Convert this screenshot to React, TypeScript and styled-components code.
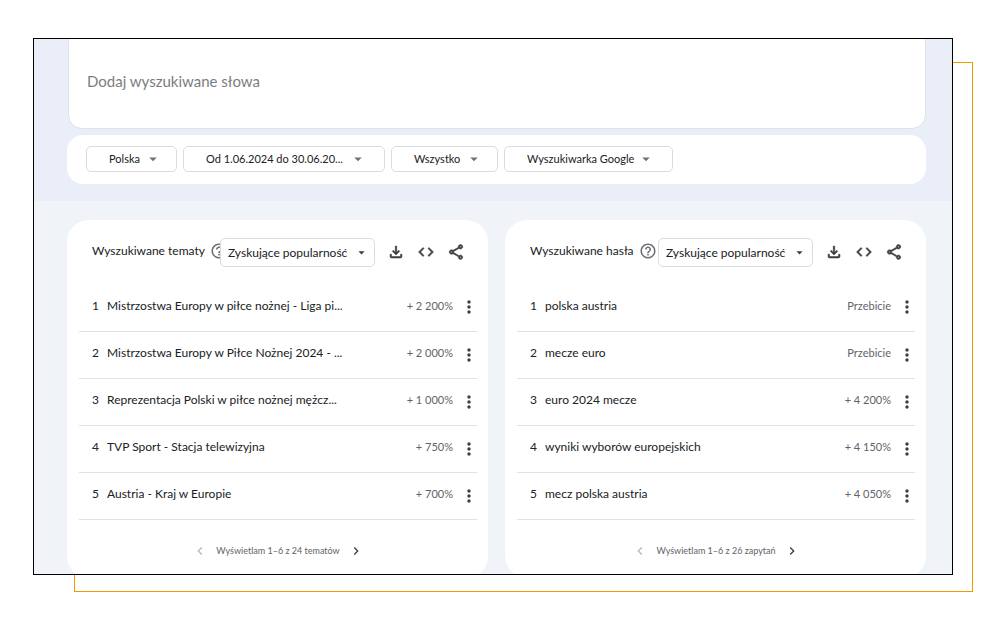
import React from "react";
import styled, { createGlobalStyle } from "styled-components";
import {
  MdArrowDropDown,
  MdChevronLeft,
  MdChevronRight,
  MdCode,
  MdHelpOutline,
  MdMoreVert,
  MdOutlineFileDownload,
  MdOutlineShare,
} from "react-icons/md";

const GlobalStyle = createGlobalStyle`
  *, *::before, *::after { box-sizing: border-box; }
  body {
    margin: 0;
    background: #fff;
    color: #202124;
    font-family: Lato, "Open Sans", sans-serif;
    font-size: 12px;
    line-height: 16px;
  }
  button, input, select { font: inherit; color: inherit; }
`;

const Page = styled.main`
  padding: 38px 48px 51px 33px;
`;

const Framed = styled.div`
  position: relative;
  z-index: 0;

  &::before {
    content: "";
    position: absolute;
    z-index: -1;
    inset: 24px -20px -17px 41px;
    border: 1px solid #f29900;
  }
`;

const Frame = styled.div`
  border: 1px solid #000;
  background: #f0f4f9;
  overflow: hidden;
`;

const Top = styled.section`
  padding: 0 26px 17px 33px;
  background: #e9eef8;
`;

const SearchCard = styled.div`
  margin: -10px 0 6px 1px;
  padding: 42px 18px 38px;
  border: 1px solid #e0e2e6;
  border-radius: 14px;
  background: #fff;
`;

const SearchInput = styled.input`
  display: block;
  width: 100%;
  height: 18px;
  padding: 0;
  border: 0;
  outline: 0;
  background: transparent;
  font-size: 15px;
  &::placeholder { color: #7b7d80; opacity: 1; }
`;

const Filters = styled.div`
  display: flex;
  gap: 6px;
  padding: 11px 19px 12px;
  border-radius: 16px;
  background: #fff;
`;

const SelectBox = styled.label<{ $width: number; $caret: number; $tall?: boolean }>`
  position: relative;
  z-index: 1;
  display: grid;
  align-items: center;
  flex: none;
  width: ${(p) => p.$width}px;
  height: ${(p) => (p.$tall ? 29 : 26)}px;
  border: 1px solid #dadce0;
  border-radius: 5px;
  background: #fff;

  > * { grid-area: 1 / 1; }
  > svg {
    justify-self: end;
    margin-right: ${(p) => p.$caret}px;
    color: ${(p) => (p.$tall ? "#3c4043" : "#6f7377")};
    pointer-events: none;
  }
`;

const Select = styled.select<{ $inset: number; $small?: boolean }>`
  appearance: none;
  width: 100%;
  height: 100%;
  padding: 0 0 0 ${(p) => p.$inset}px;
  border: 0;
  outline: 0;
  background: transparent;
  font-size: ${(p) => (p.$small ? 11 : 12)}px;
`;

const Cards = styled.div`
  display: grid;
  grid-template-columns: 1fr 1fr;
  gap: 17px;
  padding: 19px 26px 0 33px;
`;

const Card = styled.section`
  min-width: 0;
  margin-bottom: -4px;
  padding: 18px 11px 19px 12px;
  border-radius: 22px;
  background: #fff;
`;

const CardHeader = styled.header`
  display: flex;
  align-items: center;
  padding: 0 12px 0 13px;
`;

const TitleGroup = styled.div`
  display: flex;
  align-items: center;
  gap: 5px;
  flex: 1;
  min-width: 0;
  padding-bottom: 3px;
  white-space: nowrap;
`;

const Title = styled.h2`
  margin: 0;
  font-size: 12px;
  font-weight: 400;
`;

const IconButton = styled.button`
  display: inline-flex;
  align-items: center;
  justify-content: center;
  flex: none;
  padding: 0;
  border: 0;
  background: transparent;
  color: #3c4043;
  cursor: pointer;
  &:disabled { color: #b4b7bb; cursor: default; }
`;

const Actions = styled.div`
  display: flex;
  gap: 12px;
  margin-left: 12px;
  padding-bottom: 2px;

  path:not([fill="none"]) {
    stroke: currentColor;
    stroke-width: 0.7;
  }
`;

const Table = styled.table`
  width: 100%;
  margin-top: 17px;
  border-collapse: collapse;
  table-layout: fixed;
`;

const Row = styled.tr`
  height: 47px;
  border-bottom: 1px solid #dfe1e4;
`;

const Rank = styled.td`
  width: 28px;
  padding: 0 0 3px 13px;
`;

const Term = styled.td`
  padding: 0 0 3px;
  overflow: hidden;
  white-space: nowrap;
`;

const Value = styled.td`
  width: 60px;
  padding: 0 0 3px;
  color: #5f6368;
  font-size: 11px;
  text-align: right;
  white-space: nowrap;
`;

const Menu = styled.td`
  width: 24px;
  padding: 0;

  > button { display: flex; margin-left: 6px; }
`;

const Pager = styled.nav`
  display: flex;
  align-items: center;
  justify-content: center;
  gap: 8px;
  padding-top: 23px;
  color: #5f6368;
  font-size: 9px;
`;

const filters = [
  { label: "Region", text: "Polska", width: 91, caret: 14 },
  { label: "Okres", text: "Od 1.06.2024 do 30.06.20...", width: 202, caret: 17 },
  { label: "Kategoria", text: "Wszystko", width: 107, caret: 14 },
  { label: "Typ wyszukiwania", text: "Wyszukiwarka Google", width: 169, caret: 17 },
];

type Entry = [term: string, value: string];

const topics: Entry[] = [
  ["Mistrzostwa Europy w piłce nożnej - Liga pi...", "+ 2 200%"],
  ["Mistrzostwa Europy w Piłce Nożnej 2024 - ...", "+ 2 000%"],
  ["Reprezentacja Polski w piłce nożnej mężcz...", "+ 1 000%"],
  ["TVP Sport - Stacja telewizyjna", "+ 750%"],
  ["Austria - Kraj w Europie", "+ 700%"],
];

const queries: Entry[] = [
  ["polska austria", "Przebicie"],
  ["mecze euro", "Przebicie"],
  ["euro 2024 mecze", "+ 4 200%"],
  ["wyniki wyborów europejskich", "+ 4 150%"],
  ["mecz polska austria", "+ 4 050%"],
];

function TrendCard({ title, entries, range }: { title: string; entries: Entry[]; range: string }) {
  return (
    <Card>
      <CardHeader>
        <TitleGroup>
          <Title>{title}</Title>
          <IconButton aria-label="Pomoc">
            <MdHelpOutline size={18} color="#6a6d71" />
          </IconButton>
        </TitleGroup>
        <SelectBox $width={155} $caret={5} $tall>
          <Select $inset={7} aria-label={`${title} - sortowanie`}>
            <option>Zyskujące popularność</option>
          </Select>
          <MdArrowDropDown size={15} />
        </SelectBox>
        <Actions>
          <IconButton aria-label="Pobierz"><MdOutlineFileDownload size={18} /></IconButton>
          <IconButton aria-label="Umieść"><MdCode size={18} /></IconButton>
          <IconButton aria-label="Udostępnij"><MdOutlineShare size={18} /></IconButton>
        </Actions>
      </CardHeader>
      <Table aria-label={title}>
        <tbody>
          {entries.map(([term, value], i) => (
            <Row key={term}>
              <Rank>{i + 1}</Rank>
              <Term>{term}</Term>
              <Value>{value}</Value>
              <Menu>
                <IconButton aria-label={`Więcej: ${term}`}><MdMoreVert size={20} /></IconButton>
              </Menu>
            </Row>
          ))}
        </tbody>
      </Table>
      <Pager aria-label={`${title} - strony`}>
        <IconButton aria-label="Poprzednia" disabled><MdChevronLeft size={16} /></IconButton>
        <span>{range}</span>
        <IconButton aria-label="Następna"><MdChevronRight size={16} /></IconButton>
      </Pager>
    </Card>
  );
}

export default function App() {
  return (
    <>
      <GlobalStyle />
      <Page>
        <Framed>
          <Frame>
            <Top>
              <SearchCard>
                <SearchInput aria-label="Wyszukiwane słowa" placeholder="Dodaj wyszukiwane słowa" />
              </SearchCard>
              <Filters>
                {filters.map((f) => (
                  <SelectBox key={f.label} $width={f.width} $caret={f.caret}>
                    <Select $inset={22} $small aria-label={f.label}>
                      <option>{f.text}</option>
                    </Select>
                    <MdArrowDropDown size={18} />
                  </SelectBox>
                ))}
              </Filters>
            </Top>
            <Cards>
              <TrendCard title="Wyszukiwane tematy" entries={topics} range="Wyświetlam 1–6 z 24 tematów" />
              <TrendCard title="Wyszukiwane hasła" entries={queries} range="Wyświetlam 1–6 z 26 zapytań" />
            </Cards>
          </Frame>
        </Framed>
      </Page>
    </>
  );
}
